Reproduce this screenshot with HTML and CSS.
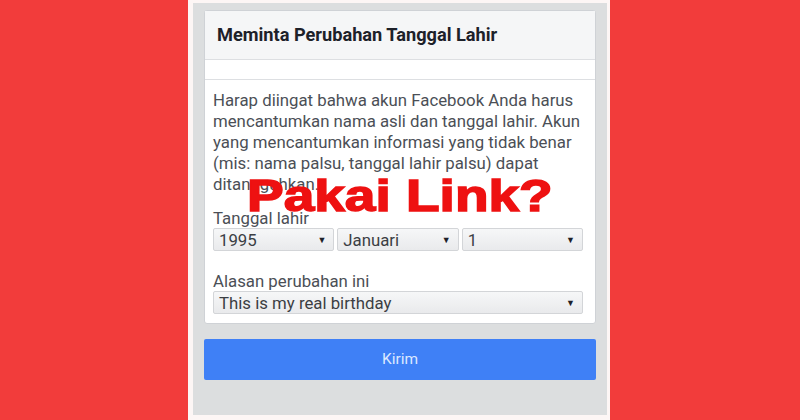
FILE: index.html
```html
<!DOCTYPE html>
<html lang="id">
<head>
<meta charset="UTF-8">
<meta name="viewport" content="width=device-width, initial-scale=1.0">
<title>Meminta Perubahan Tanggal Lahir</title>
<link rel="stylesheet" href="styles.css">
</head>
<body>

<div class="frame">
    <div class="screen">
        <div class="card">
            <div class="card-header">Meminta Perubahan Tanggal Lahir</div>
            <div class="card-spacer"></div>
            <div class="card-body">
                <p class="notice">Harap diingat bahwa akun Facebook Anda harus mencantumkan nama asli dan tanggal lahir. Akun yang mencantumkan informasi yang tidak benar (mis: nama palsu, tanggal lahir palsu) dapat ditangguhkan.</p>
                <div class="field-label">Tanggal lahir</div>
                <div class="select-row">
                    <div class="select"><span>1995</span><span class="arrow">&#9660;</span></div>
                    <div class="select"><span>Januari</span><span class="arrow">&#9660;</span></div>
                    <div class="select"><span>1</span><span class="arrow">&#9660;</span></div>
                </div>
                <div class="field-label second">Alasan perubahan ini</div>
                <div class="select"><span>This is my real birthday</span><span class="arrow">&#9660;</span></div>
            </div>
        </div>
        <div class="submit">Kirim</div>
    </div>
    <div class="stamp">Pakai Link?</div>
</div>

</body>
</html>
```

FILE: styles.css
```css
body {
    margin: 0;
    background-color: #f23c3b;
    font-family: Roboto, "Liberation Sans", sans-serif;
}
.frame {
    position: relative;
    width: 414px;
    height: 412px;
    margin-left: 188px;
    border-style: solid;
    border-color: #fdf6f5;
    border-width: 3px 3px 5px 5px;
}
.screen {
    height: 100%;
    box-sizing: border-box;
    padding: 7px 11px 0 11px;
    background-color: #dcdedf;
}
.card {
    background-color: #fff;
    border: 1px solid #cfd2d6;
    border-radius: 3px;
}
.card-header {
    height: 48px;
    line-height: 48px;
    padding-left: 12px;
    background-color: #f5f6f7;
    border-bottom: 1px solid #dddfe2;
    color: #1d2129;
    font-size: 18.2px;
    font-weight: bold;
}
.card-spacer {
    height: 19px;
    border-bottom: 1px solid #dddfe2;
}
.card-body {
    padding: 10px 12px 9px 8px;
    color: #4b4f56;
    font-size: 16.8px;
}
.notice {
    margin: 0;
    line-height: 21px;
}
.field-label {
    margin-top: 13px;
    line-height: 20px;
}
.field-label.second {
    margin-top: 20px;
}
.select-row {
    display: flex;
    gap: 3px;
}
.select-row .select {
    flex: 1;
}
.select {
    display: flex;
    justify-content: space-between;
    align-items: center;
    height: 21px;
    padding: 0 7px 0 5px;
    background: linear-gradient(#f6f7f8, #e9eaec);
    border: 1px solid #d3d5d8;
    border-radius: 2px;
    color: #3b3e43;
    font-size: 16.8px;
}
.arrow {
    font-size: 9px;
    color: #1d2129;
}
.submit {
    margin-top: 15px;
    height: 41px;
    line-height: 41px;
    border-radius: 2px;
    background-color: #3f80f6;
    color: #dce8ff;
    text-align: center;
    font-size: 15.5px;
}
.stamp {
    position: absolute;
    left: 54px;
    top: 168px;
    color: #ee1111;
    font-family: "Liberation Sans", Arial, sans-serif;
    font-size: 44px;
    font-weight: bold;
    -webkit-text-stroke: 1.5px #ee1111;
    transform: scaleX(1.25);
    transform-origin: left top;
}
```
